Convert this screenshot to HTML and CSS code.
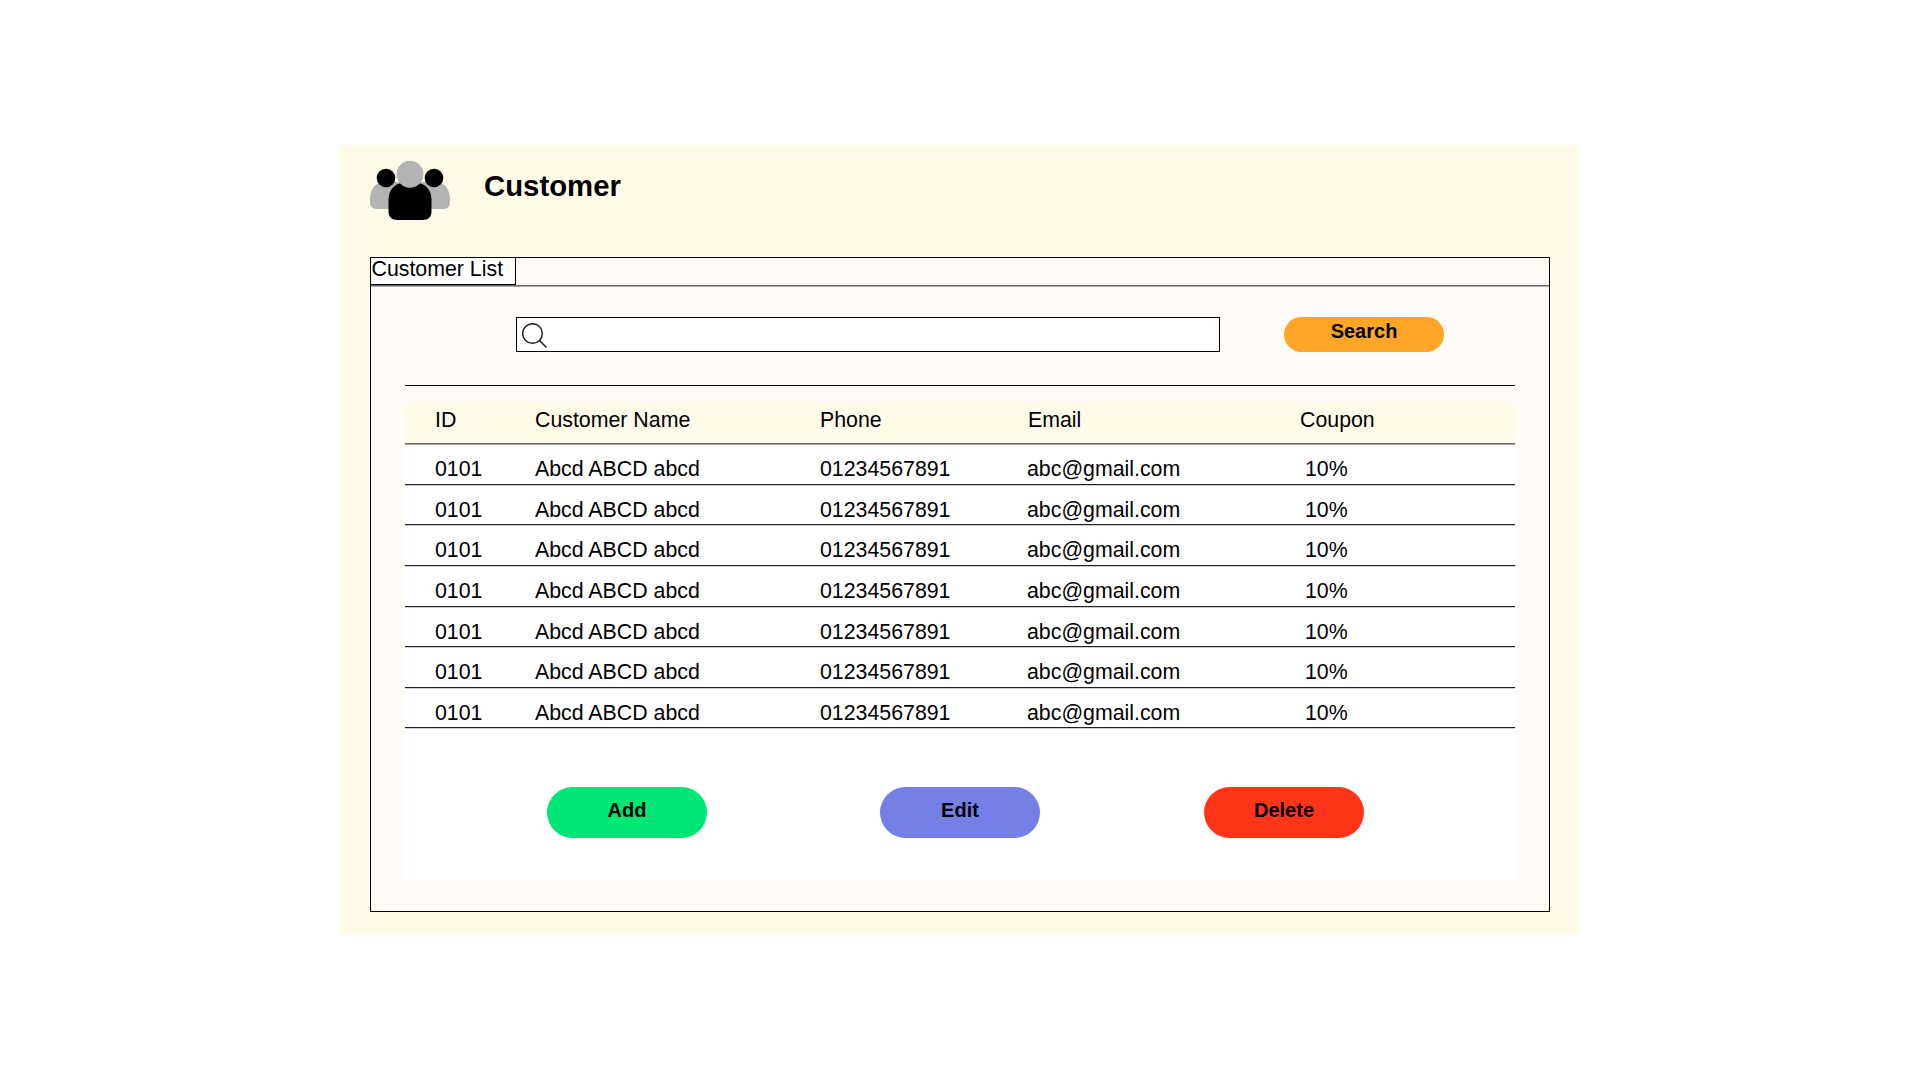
FILE: index.html
```html
<!DOCTYPE html>
<html lang="en">
<head>
<meta charset="utf-8">
<title>Customer</title>
<link rel="stylesheet" href="styles.css">
</head>
<body>
<main class="page">
  <header class="header">
    <svg class="logo" width="80" height="60" viewBox="0 0 80 60" aria-hidden="true">
      <path fill="#b3b3b3" d="M0 39c0-10 6-17 14-17h52c8 0 14 7 14 17v4c0 3-3 6-6 6H6c-3 0-6-3-6-6z"/>
      <circle cx="16" cy="18" r="9.300" fill="#000"/>
      <circle cx="64" cy="18" r="9.300" fill="#000"/>
      <path fill="#000" d="M18.500 40c0-11 7-17 15-17h13c8 0 15 6 15 17v11c0 6-3 9-9 9H27.500c-6 0-9-3-9-9z"/>
      <circle cx="40" cy="14.300" r="13.500" fill="#b3b3b3"/>
    </svg>
    <h1 class="title">Customer</h1>
  </header>
  <section class="panel">
    <div class="tabs"><div class="tab">Customer List</div></div>
    <div class="panel-body">
      <div class="search-row">
        <div class="search-box">
          <svg class="search-icon" width="26" height="26" viewBox="0 0 26 26" aria-hidden="true">
            <circle cx="10.500" cy="10.500" r="9.800" fill="none" stroke="#222" stroke-width="1.500"/>
            <path d="M17.500 17.500l7 7" fill="none" stroke="#222" stroke-width="1.600"/>
          </svg>
        </div>
        <button class="btn btn-search">Search</button>
      </div>
      <div class="table-wrap">
        <div class="row row-head">
          <span>ID</span><span>Customer Name</span><span>Phone</span><span>Email</span><span>Coupon</span>
        </div>
        <div class="row"><span>0101</span><span>Abcd ABCD abcd</span><span>01234567891</span><span>abc@gmail.com</span><span>10%</span></div>
        <div class="row"><span>0101</span><span>Abcd ABCD abcd</span><span>01234567891</span><span>abc@gmail.com</span><span>10%</span></div>
        <div class="row"><span>0101</span><span>Abcd ABCD abcd</span><span>01234567891</span><span>abc@gmail.com</span><span>10%</span></div>
        <div class="row"><span>0101</span><span>Abcd ABCD abcd</span><span>01234567891</span><span>abc@gmail.com</span><span>10%</span></div>
        <div class="row"><span>0101</span><span>Abcd ABCD abcd</span><span>01234567891</span><span>abc@gmail.com</span><span>10%</span></div>
        <div class="row"><span>0101</span><span>Abcd ABCD abcd</span><span>01234567891</span><span>abc@gmail.com</span><span>10%</span></div>
        <div class="row"><span>0101</span><span>Abcd ABCD abcd</span><span>01234567891</span><span>abc@gmail.com</span><span>10%</span></div>
        <div class="actions">
          <button class="btn btn-add">Add</button>
          <button class="btn btn-edit">Edit</button>
          <button class="btn btn-delete">Delete</button>
        </div>
      </div>
    </div>
  </section>
</main>
</body>
</html>
```
FILE: styles.css
```css
* { box-sizing: border-box; }
html, body { margin: 0; padding: 0; background: #fff; }
body { font-family: "Liberation Sans", Arial, sans-serif; color: #000; height: 1080px; overflow: hidden; }

.page {
  width: 1239px;
  height: 790px;
  margin: 145px 0 0 340px;
  padding: 15px 29px 23px 30px;
  background: #fffbe8;
  display: flex;
  flex-direction: column;
}

.header { display: flex; align-items: flex-start; height: 97px; flex: none; }
.logo { display: block; flex: none; }
.title { margin: 9px 0 0 34px; font-size: 29.33px; line-height: 34px; font-weight: 700; }

.panel {
  flex: 1;
  display: flex;
  flex-direction: column;
  border: 1px solid #000;
  background: #fffcf7;
}
.tabs { height: 28px; border-bottom: 1px solid #666; box-shadow: 0 1px 0 #aaa; flex: none; }
.tab {
  width: 145px;
  height: 27px;
  padding-left: 0.500px;
  font-size: 21.33px;
  line-height: 22px;
  background: #fff;
  border-right: 1px solid #000;
  border-bottom: 1px solid #000;
}

.panel-body { flex: 1; padding: 0 34px 31px; display: flex; flex-direction: column; }

.search-row {
  height: 100px;
  flex: none;
  padding-top: 31px;
  display: flex;
  align-items: flex-start;
  border-bottom: 1px solid #000;
}
.search-box {
  width: 704px;
  height: 35px;
  margin-left: 111px;
  padding: 5px 0 0 5px;
  border: 1px solid #000;
  background: #fff;
}
.search-icon { display: block; }

.btn {
  border: 0;
  margin: 0;
  padding: 0;
  width: 160px;
  color: #000;
  font-family: inherit;
  font-weight: 700;
  font-size: 20px;
  line-height: 23px;
}
.btn-search {
  height: 35px;
  margin-left: 64px;
  padding-bottom: 6px;
  border-radius: 17.500px;
  background: #ffa629;
}

.table-wrap {
  flex: 1;
  margin-top: 16px;
  background: #fff;
  display: flex;
  flex-direction: column;
}
.row {
  display: grid;
  grid-template-columns: 100px 285px 207px 278px 1fr;
  height: 40.650px;
  flex: none;
  padding-left: 30px;
  padding-top: 13px;
  font-size: 21.33px;
  line-height: 24px;
  border-bottom: 1px solid #222;
  box-shadow: 0 1px 0 #ccc;
  align-items: start;
}
.row-head {
  height: 42px;
  padding-top: 6px;
  background: #fffbe8;
  border-bottom-color: #666;
  box-shadow: 0 1px 0 #aaa;
  grid-template-columns: 100px 285px 208px 272px 1fr;
}

.actions {
  flex: 1;
  padding-bottom: 42px;
  display: flex;
  align-items: flex-end;
}
.actions .btn { height: 51px; border-radius: 25.500px; padding-bottom: 5px; flex: none; }
.btn-add { margin-left: 142px; background: #00e676; }
.btn-edit { margin-left: 173px; background: #757fe6; }
.btn-delete { margin-left: 164px; background: #ff3419; }
```
